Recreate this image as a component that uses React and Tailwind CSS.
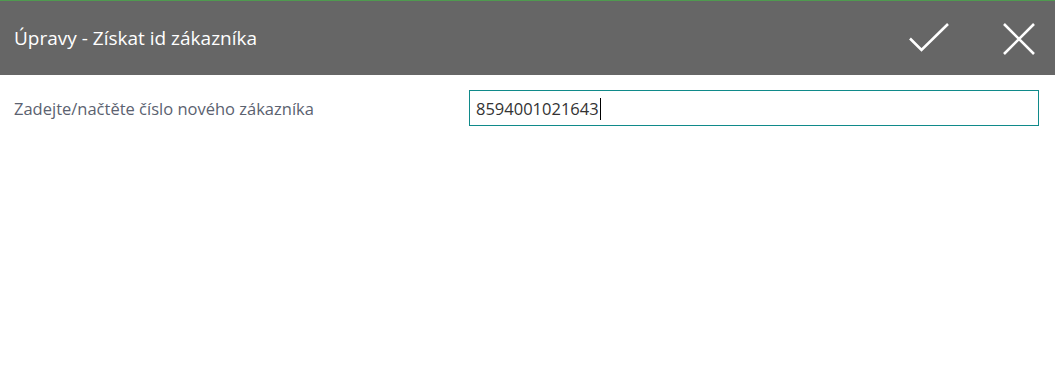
export default function App() {
  return (
    <div className="w-[1055px] h-[372px] bg-white overflow-hidden" style={{ fontFamily: '"Open Sans", "Noto Sans", sans-serif' }}>
      <div className="h-px bg-[#4f9a4f]" />
      <div className="h-[74px] bg-[#666666] flex items-center pl-[14px] pr-[20px]">
        <div className="flex-1 text-white text-[19px] leading-none pt-[1px]">Úpravy - Získat id zákazníka</div>
        <div className="flex items-center gap-[54px]">
          <svg width="40" height="30" viewBox="0 0 40 30" className="block">
            <path d="M1 15.5 L12.5 27 L39 1" fill="none" stroke="white" strokeWidth="2.6" />
          </svg>
          <svg width="32" height="32" viewBox="0 0 32 32" className="block mt-[2px]">
            <path d="M1 1 L31 31 M31 1 L1 31" fill="none" stroke="white" strokeWidth="2.6" />
          </svg>
        </div>
      </div>
      <div className="flex items-start pt-[15px] pl-[14px]">
        <div className="w-[455px] text-[16.5px] text-[#5b6270] pt-[9px] leading-[20px]">Zadejte/načtěte číslo nového zákazníka</div>
        <div className="w-[570px] h-[36px] border border-[#108a8a] flex items-center pl-[6px] pt-[2px] text-[16.5px] text-[#333333]">
          <span>8594001021643</span>
          <span className="inline-block w-px h-[22px] bg-black ml-[1px]" />
        </div>
      </div>
    </div>
  );
}
